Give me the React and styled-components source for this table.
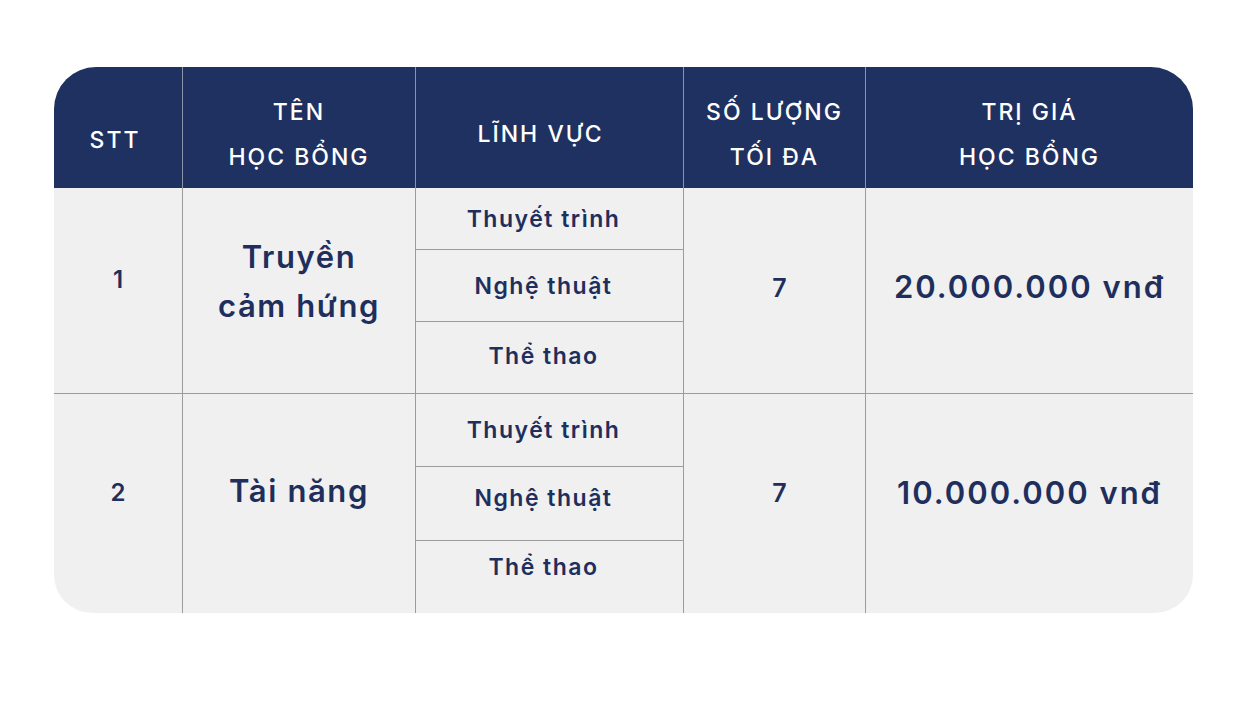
import React from 'react';
import styled, { createGlobalStyle } from 'styled-components';

const GlobalStyle = createGlobalStyle`
  body {
    margin: 0;
    background: #ffffff;
    font-family: Inter, "Noto Sans", sans-serif;
  }
`;

const Page = styled.div`
  width: 1248px;
  height: 717px;
  padding: 67px 0 0 54px;
  box-sizing: border-box;
`;

const Table = styled.div`
  display: grid;
  width: 1139px;
  grid-template-columns: 128px 233px 268px 182px 328px;
  grid-template-rows: 121px 61px 72px 72px 73px 74px 73px;
  background: #f0f0f0;
  border-radius: 42px 42px 38px 38px;
  overflow: hidden;
`;

const HeadCell = styled.div`
  background: #1f3160;
  color: #ffffff;
  display: flex;
  flex-direction: column;
  align-items: center;
  justify-content: center;
  text-align: center;
  font-size: 23px;
  font-weight: 500;
  line-height: 45px;
  letter-spacing: 2px;
  border-left: ${p => (p.$first ? 'none' : '1px solid #8b93aa')};
  padding-top: ${p => p.$pt ?? 14}px;
  padding-right: ${p => p.$pr || 0}px;
  box-sizing: border-box;
`;

const Cell = styled.div`
  display: flex;
  align-items: center;
  justify-content: center;
  text-align: center;
  color: #1e2f5e;
  font-weight: 600;
  font-size: ${p => p.$size || 23}px;
  line-height: ${p => p.$lh || 'normal'};
  letter-spacing: ${p => p.$ls ?? 1.5}px;
  grid-row: ${p => p.$row};
  grid-column: ${p => p.$col};
  border-left: ${p => (p.$col === 1 ? 'none' : '1px solid #9c9c9c')};
  border-top: ${p => (p.$top ? '1px solid #9c9c9c' : 'none')};
  padding-bottom: ${p => p.$pb || 0}px;
  padding-right: ${p => p.$pr || 0}px;
  padding-left: ${p => p.$pl || 0}px;
  box-sizing: border-box;
`;

const rows = [
  {
    no: '1',
    name: ['Truyền', 'cảm hứng'],
    max: '7',
    value: '20.000.000 vnđ',
    start: 2,
    pb: { no: 22, name: 20, max: 6, value: 8 },
    subPb: [-4, -4, 4],
  },
  {
    no: '2',
    name: ['Tài năng'],
    max: '7',
    value: '10.000.000 vnđ',
    start: 5,
    pb: { no: 22, name: 26, max: 22, value: 22 },
    subPb: [-8, 12, 20],
  },
];

const fields = ['Thuyết trình', 'Nghệ thuật', 'Thể thao'];

export default function App() {
  return (
    <>
      <GlobalStyle />
      <Page>
        <Table>
          <HeadCell $first $pt={26} $pr={6}>STT</HeadCell>
          <HeadCell>
            <span>TÊN</span>
            <span>HỌC BỔNG</span>
          </HeadCell>
          <HeadCell $pt={14} $pr={18}>LĨNH VỰC</HeadCell>
          <HeadCell>
            <span>SỐ LƯỢNG</span>
            <span>TỐI ĐA</span>
          </HeadCell>
          <HeadCell>
            <span>TRỊ GIÁ</span>
            <span>HỌC BỔNG</span>
          </HeadCell>

          {rows.map((r, i) => {
            const span = `${r.start} / span 3`;
            const top = i > 0;
            return (
              <React.Fragment key={r.no}>
                <Cell $col={1} $row={span} $top={top} $pb={r.pb.no} $size={24} $ls={0}>
                  {r.no}
                </Cell>
                <Cell
                  $col={2}
                  $row={span}
                  $top={top}
                  $pb={r.pb.name}
                  $size={31}
                  $lh="49px"
                  $ls={1.6}
                >
                  <div>
                    {r.name.map(n => (
                      <div key={n}>{n}</div>
                    ))}
                  </div>
                </Cell>
                {fields.map((f, j) => (
                  <Cell
                    key={f}
                    $col={3}
                    $row={r.start + j}
                    $top={top || j > 0}
                    $pb={r.subPb[j]}
                    $pr={12}
                  >
                    {f}
                  </Cell>
                ))}
                <Cell
                  $col={4}
                  $row={span}
                  $top={top}
                  $pb={r.pb.max}
                  $pl={10}
                  $size={25}
                  $ls={0}
                >
                  {r.max}
                </Cell>
                <Cell $col={5} $row={span} $top={top} $pb={r.pb.value} $size={31} $ls={2}>
                  {r.value}
                </Cell>
              </React.Fragment>
            );
          })}
        </Table>
      </Page>
    </>
  );
}
